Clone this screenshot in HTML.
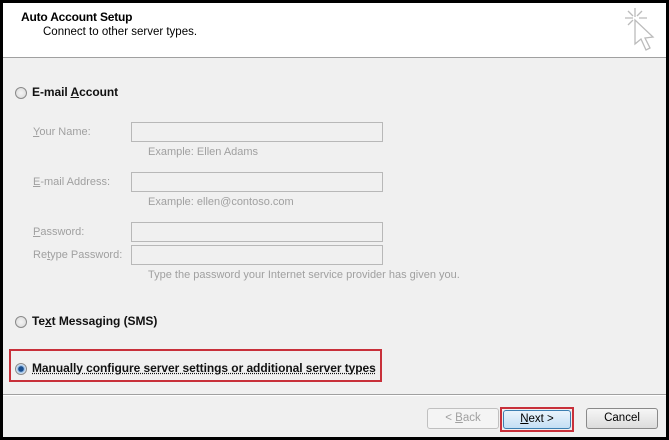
<!DOCTYPE html>
<html><head><style>
*{margin:0;padding:0;box-sizing:border-box}
body{width:669px;height:440px;background:#000;position:relative;overflow:hidden;font-family:"Liberation Sans",sans-serif;font-size:11px}
.win{position:absolute;left:3px;top:3px;width:663px;height:434px;background:#f0f0f0}
.hdr{position:absolute;left:0;top:0;width:663px;height:55px;background:#fff;border-bottom:1px solid #a0a0a0}
.a{position:absolute;white-space:nowrap}
.g{color:#a0a0a0}
.in{position:absolute;left:128px;width:252px;height:20px;border:1px solid #b8b8b8;background:#f0f0f0}
.rad{position:absolute;width:12px;height:12px;border-radius:50%;border:1px solid #8a8a8a;background:radial-gradient(circle,#f4f4f4,#d8d8d8)}
.b{font-weight:bold;font-size:12px;color:#111;letter-spacing:-0.06px}
.btn{position:absolute;top:405px;height:21px;border:1px solid #8a8a8a;border-radius:3px;background:linear-gradient(#f6f6f6,#dcdcdc);text-align:center;line-height:19px;font-size:11.5px}
</style></head><body>
<div class="win">
<div class="hdr">
<div class="a" style="left:18px;top:7px;font-weight:bold;font-size:12px;letter-spacing:-0.2px">Auto Account Setup</div>
<div class="a" style="left:40px;top:23px;font-size:11.5px">Connect to other server types.</div>
<svg class="a" style="left:617px;top:3px" width="40" height="52" viewBox="0 0 40 52"><g stroke="#bbb" stroke-width="1.3" fill="none"><path d="M15 2v9M5 12h8M19 12h8M8 5l5 5M22 5l-5 5M8 19l5-5"/><path d="M15 14l0 24 6-5 5 11 4-2-5-10 8-1z" fill="#fff"/></g></svg>
</div>
<div class="rad" style="left:12px;top:84px"></div>
<div class="a b" style="left:29px;top:82px">E-mail <u>A</u>ccount</div>
<div class="a g" style="left:30px;top:123px"><u>Y</u>our Name:</div>
<div class="in" style="top:119px"></div>
<div class="a g" style="left:145px;top:143px">Example: Ellen Adams</div>
<div class="a g" style="left:30px;top:173px"><u>E</u>-mail Address:</div>
<div class="in" style="top:169px"></div>
<div class="a g" style="left:145px;top:193px">Example: ellen@contoso.com</div>
<div class="a g" style="left:30px;top:223px"><u>P</u>assword:</div>
<div class="in" style="top:219px"></div>
<div class="a g" style="left:30px;top:246px">Re<u>t</u>ype Password:</div>
<div class="in" style="top:242px"></div>
<div class="a g" style="left:145px;top:266px">Type the password your Internet service provider has given you.</div>
<div class="rad" style="left:12px;top:313px"></div>
<div class="a b" style="left:29px;top:311px">Te<u>x</u>t Messaging (SMS)</div>
<div class="a" style="left:6px;top:346px;width:373px;height:33px;border:2px solid #c8303a"></div>
<div class="rad" style="left:12px;top:360px;background:radial-gradient(circle,#1b4f8f 0 2.5px,#8ab4e0 3px,#e8f0fa 5px)"></div>
<div class="a b" style="left:29px;top:358px;text-decoration:underline dotted">Manually configure server settings or additional server types</div>
<div class="a" style="left:0;top:391px;width:663px;height:1px;background:#a0a0a0"></div>
<div class="a" style="left:0;top:392px;width:663px;height:1px;background:#fff"></div>
<div class="btn" style="left:424px;width:72px;color:#a0a0a0;border-color:#c0c0c0;background:#f4f4f4">&lt; <u>B</u>ack</div>
<div class="a" style="left:497px;top:404px;width:74px;height:25px;border:2px solid #c8303a"></div>
<div class="btn" style="left:500px;top:407px;width:68px;height:19px;line-height:17px;background:linear-gradient(#eaf4fc,#c4dff4);border-color:#3c7fb1"><u>N</u>ext &gt;</div>
<div class="btn" style="left:583px;width:72px">Cancel</div>
</div>
</body></html>
